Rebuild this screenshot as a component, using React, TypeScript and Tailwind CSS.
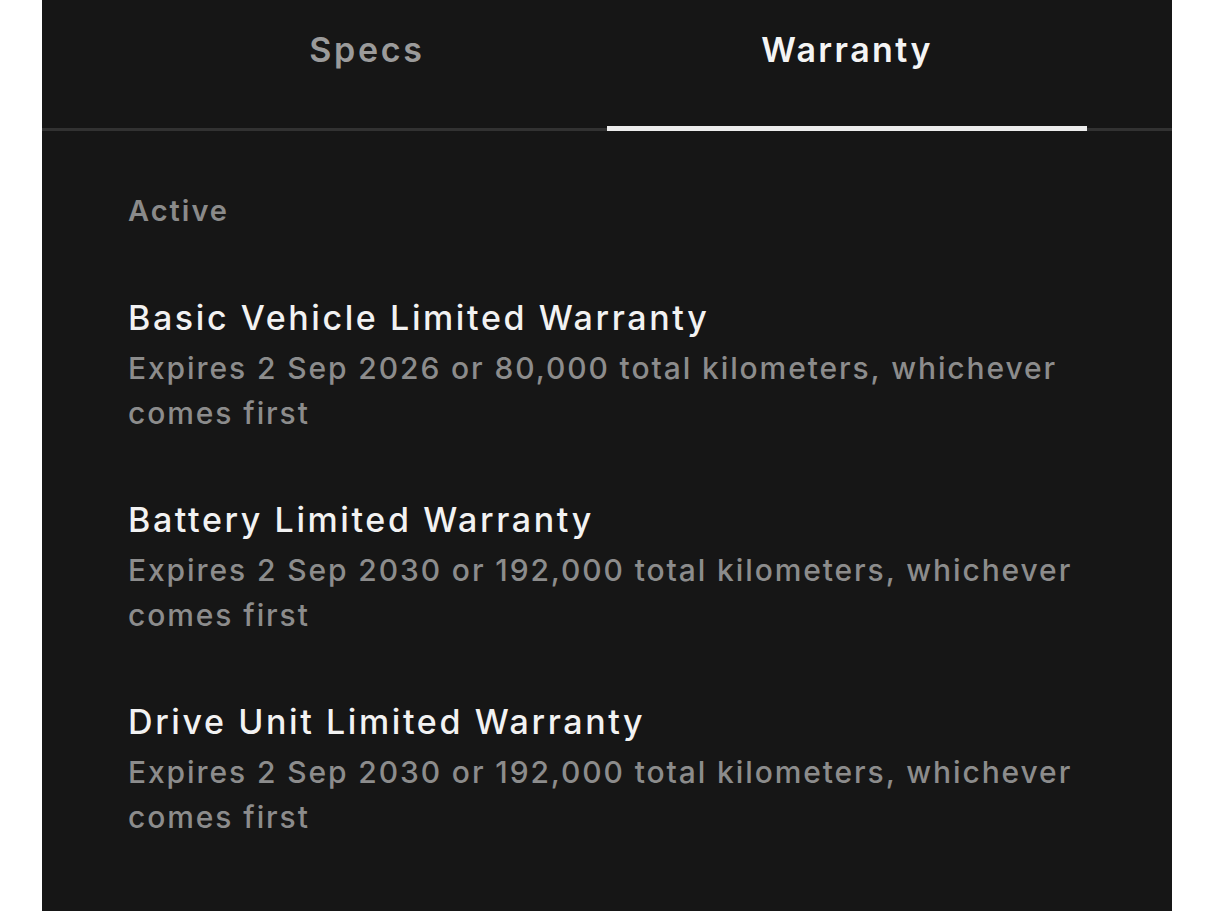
import React from "react";

const items = [
  {
    title: "Basic Vehicle Limited Warranty",
    sub: "Expires 2 Sep 2026 or 80,000 total kilometers, whichever comes first",
  },
  {
    title: "Battery Limited Warranty",
    sub: "Expires 2 Sep 2030 or 192,000 total kilometers, whichever comes first",
  },
  {
    title: "Drive Unit Limited Warranty",
    sub: "Expires 2 Sep 2030 or 192,000 total kilometers, whichever comes first",
  },
];

export default function App() {
  return (
    <div
      className="w-[1215px] h-[911px] bg-white flex overflow-hidden"
      style={{ fontFamily: "Inter, 'Noto Sans', sans-serif" }}
    >
      <div className="ml-[42px] w-[1130px] h-full bg-[#161616] flex flex-col">
        <div className="h-[131px] flex px-[85px] border-b-[3px] border-[#323232]">
          <div className="flex-1 flex justify-center pt-[28px]">
            <span className="text-[34px] leading-[44px] font-semibold text-[#9b9b9b] tracking-[2.7px]">
              Specs
            </span>
          </div>
          <div className="flex-1 flex flex-col items-center justify-between pt-[28px]">
            <span className="text-[34px] leading-[44px] font-semibold text-[#f4f4f4] tracking-[2.4px]">
              Warranty
            </span>
            <div className="w-full h-[5px] bg-[#ececec] mb-[-3px]" />
          </div>
        </div>
        <div className="pl-[86px] pr-[40px] pt-[62px]">
          <div className="text-[29px] leading-[36px] font-semibold text-[#8a8a8a] tracking-[2px]">
            Active
          </div>
          <div className="flex flex-col gap-[62px] mt-[67px]">
            {items.map((it) => (
              <div key={it.title} className="flex flex-col">
                <div className="text-[34px] leading-[44px] font-medium text-[#f2f2f2] tracking-[2.6px]">
                  {it.title}
                </div>
                <div className="mt-[6px] text-[30px] leading-[45px] font-medium text-[#8c8c8c] tracking-[1.9px]">
                  {it.sub}
                </div>
              </div>
            ))}
          </div>
        </div>
      </div>
    </div>
  );
}
